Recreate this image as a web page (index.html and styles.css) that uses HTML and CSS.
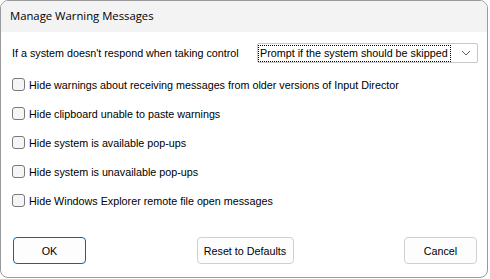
FILE: index.html
```html
<!DOCTYPE html>
<html lang="en">
	<head>
		<meta charset="UTF-8" />
		<title>Manage Warning Messages</title>
		<link rel="stylesheet" href="styles.css">
	</head>

	<body>
		<div class="window">
			<div class="titlebar">Manage Warning Messages</div>

			<div class="content">
				<div class="row-select">
					<span class="label">If a system doesn't respond when taking control</span>
					<div class="combo">
						<span class="combo-text">Prompt if the system should be skipped</span>
						<svg class="chevron" width="10" height="6" viewBox="0 0 10 6">
							<path d="M1 1 L5 5 L9 1" fill="none" stroke="#606060" stroke-width="1" />
						</svg>
					</div>
				</div>

				<ul class="checks">
					<li><span class="box"></span>Hide warnings about receiving messages from older versions of Input Director</li>
					<li><span class="box"></span>Hide clipboard unable to paste warnings</li>
					<li><span class="box"></span>Hide system is available pop-ups</li>
					<li><span class="box"></span>Hide system is unavailable pop-ups</li>
					<li><span class="box"></span>Hide Windows Explorer remote file open messages</li>
				</ul>

				<div class="buttons">
					<button class="btn btn-default">OK</button>
					<button class="btn">Reset to Defaults</button>
					<button class="btn">Cancel</button>
				</div>
			</div>
		</div>
	</body>
</html>
```

FILE: styles.css
```css
body {
	margin: 0;
	background: #ffffff;
	font-family: "Liberation Sans", Arial, sans-serif;
	font-size: 10.75px;
	color: #000000;
}

.window {
	width: 486px;
	height: 276px;
	border: 1px solid #9a9a9a;
	border-radius: 8px;
	overflow: hidden;
	background: #ffffff;
	display: flex;
	flex-direction: column;
}

.titlebar {
	height: 31px;
	background: #f3f3f3;
	font-family: "Open Sans", "Noto Sans", sans-serif;
	font-size: 11.3px;
	line-height: 30px;
	padding-left: 9px;
	color: #000000;
}

.content {
	flex: 1;
	padding: 11px 9px 0 11px;
	display: flex;
	flex-direction: column;
}

.row-select {
	display: flex;
	align-items: center;
	justify-content: space-between;
	height: 20px;
}

.combo {
	width: 221px;
	height: 20px;
	border: 1px solid #c8c8c8;
	border-radius: 2px;
	display: flex;
	align-items: center;
	justify-content: space-between;
	padding: 0 6px 0 1px;
	box-sizing: border-box;
	white-space: nowrap;
}

.combo-text {
	outline: 1px dotted #000000;
	width: 190px;
	padding-left: 1px;
	line-height: 15px;
}

.checks {
	list-style: none;
	margin: 15px 0 0 0;
	padding: 0;
	display: flex;
	flex-direction: column;
	gap: 16px;
}

.checks li {
	display: flex;
	align-items: center;
	height: 13px;
}

.box {
	width: 13px;
	height: 13px;
	box-sizing: border-box;
	border: 1px solid #7a7a7a;
	border-radius: 3px;
	background: #f5f5f5;
	margin-right: 4px;
}

.buttons {
	margin-top: auto;
	margin-bottom: 13px;
	display: flex;
	justify-content: space-between;
	padding: 0 1px 0 1px;
}

.btn {
	height: 27px;
	width: 73px;
	font-family: "Liberation Sans", Arial, sans-serif;
	font-size: 10.75px;
	background: #fdfdfd;
	border: 1px solid #d0d0d0;
	border-radius: 4px;
	color: #000000;
	padding: 0;
}

.btn:nth-child(2) {
	width: 97px;
}

.btn-default {
	border-color: #0067c0;
}
```
